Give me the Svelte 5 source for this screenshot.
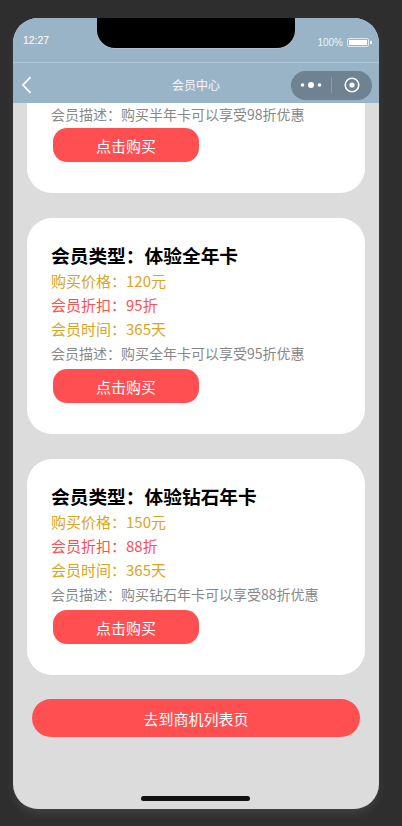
<script>
  const cards = [
    { name: '体验全年卡', price: 120, discount: 95, days: 365, desc: '购买全年卡可以享受95折优惠' },
    { name: '体验钻石年卡', price: 150, discount: 88, days: 365, desc: '购买钻石年卡可以享受88折优惠' }
  ];
</script>

<div class="page">
  <div class="phone">
    <div class="notch"></div>

    <header class="header">
      <div class="status">
        <span class="time">12:27</span>
        <div class="battery-wrap">
          <span>100%</span>
          <svg width="25" height="9" viewBox="0 0 25 9">
            <rect x="0.5" y="0.5" width="21" height="8" rx="1.5" fill="none" stroke="#dfe8ee" stroke-width="1" />
            <rect x="2" y="2" width="18" height="5" fill="#fff" />
            <rect x="23" y="3" width="2" height="3" fill="#fff" />
          </svg>
        </div>
      </div>
      <nav class="nav">
        <svg class="back" width="11" height="18" viewBox="0 0 11 18">
          <path d="M9.5 1.2 L2 9 L9.5 16.8" fill="none" stroke="#fff" stroke-width="1.8" />
        </svg>
        <span class="nav-title">会员中心</span>
        <div class="capsule">
          <svg width="22" height="8" viewBox="0 0 22 8">
            <circle cx="2.5" cy="4" r="1.8" fill="#fff" />
            <circle cx="11" cy="4" r="3" fill="#fff" />
            <circle cx="19.5" cy="4" r="1.8" fill="#fff" />
          </svg>
          <i class="divider"></i>
          <svg width="16" height="16" viewBox="0 0 16 16">
            <circle cx="8" cy="8" r="6.8" fill="none" stroke="#fff" stroke-width="1.6" />
            <circle cx="8" cy="8" r="2.6" fill="#fff" />
          </svg>
        </div>
      </nav>
    </header>

    <main class="content">
      <section class="card clipped">
        <p class="desc">会员描述：购买半年卡可以享受98折优惠</p>
        <button class="buy">点击购买</button>
      </section>
      {#each cards as card}
        <section class="card">
          <h3>会员类型：{card.name}</h3>
          <p class="gold">购买价格：{card.price}元</p>
          <p class="red">会员折扣：{card.discount}折</p>
          <p class="gold">会员时间：{card.days}天</p>
          <p class="desc">会员描述：{card.desc}</p>
          <button class="buy">点击购买</button>
        </section>
      {/each}
      <button class="go">去到商机列表页</button>
    </main>

    <div class="home-bar"></div>
  </div>
</div>

<style>
  :global(body) {
    margin: 0;
    background: #2e2e2e;
  }
  .page {
    height: 826px;
    padding: 18px 23px 0 13px;
    box-sizing: border-box;
    overflow: hidden;
    font-family: "Noto Sans CJK SC", "Noto Sans", sans-serif;
  }
  .phone {
    position: relative;
    display: flex;
    flex-direction: column;
    width: 366px;
    height: 791px;
    background: #dcdcdc;
    border-radius: 25px;
    overflow: hidden;
    box-shadow: 0 6px 12px -3px rgba(255, 255, 255, 0.12);
  }
  .notch {
    position: absolute;
    top: 0;
    left: 84px;
    z-index: 2;
    width: 198px;
    height: 30px;
    background: #000;
    border-radius: 0 0 18px 18px;
    box-shadow: 0 0.5px 0 #ccd;
  }
  .header {
    flex: none;
    background: #9ab4c7;
    color: #fff;
  }
  .status {
    display: flex;
    justify-content: space-between;
    height: 44px;
    padding: 0 7px 0 10px;
    border-bottom: 1px solid #b0c7d8;
    font-family: "Liberation Sans", sans-serif;
    font-size: 10.4px;
  }
  .time {
    margin-top: 17px;
  }
  .battery-wrap {
    display: flex;
    align-items: center;
    gap: 4px;
    height: 10px;
    margin-top: 19px;
    font-size: 10px;
    color: #eef3f6;
  }
  .nav {
    position: relative;
    display: flex;
    align-items: center;
    justify-content: space-between;
    height: 40px;
    padding: 0 7px 0 8px;
  }
  .back {
    margin-top: 3px;
  }
  .nav-title {
    position: absolute;
    left: 0;
    right: 0;
    top: 12px;
    font-size: 12px;
    line-height: 20px;
    text-align: center;
    color: #f4f7f9;
  }
  .capsule {
    display: flex;
    align-items: center;
    box-sizing: border-box;
    width: 81px;
    height: 29px;
    margin-top: 4px;
    padding-left: 9px;
    background: #6f8292;
    border-radius: 15px;
  }
  .divider {
    width: 1px;
    height: 16px;
    margin: 0 12px 0 9px;
    background: #8a9baa;
  }
  .content {
    flex: 1;
    min-height: 0;
    display: flex;
    flex-direction: column;
    gap: 25px;
    padding-left: 14px;
  }
  .card {
    flex: none;
    box-sizing: border-box;
    width: 338px;
    height: 216px;
    padding: 23px 25px 0 24px;
    background: #fff;
    border-radius: 25px;
  }
  .card.clipped {
    height: 90px;
    padding-top: 1px;
    border-radius: 0 0 25px 25px;
  }
  h3 {
    margin: 0;
    font-size: 18.72px;
    font-weight: 700;
    line-height: 28px;
    color: #000;
  }
  p {
    margin: 0;
    font-size: 15px;
    line-height: 24px;
  }
  .gold {
    color: #daa520;
  }
  .red {
    color: #ff4f51;
  }
  p.desc {
    font-size: 14px;
    line-height: 24px;
    color: #888;
  }
  .clipped p.desc {
    line-height: 20px;
  }
  button {
    display: block;
    border: none;
    padding: 0;
    background: #ff4f51;
    color: #fff;
    font-family: inherit;
    font-size: 15px;
  }
  .buy {
    width: 146px;
    height: 34px;
    margin: 4px 0 0 2px;
    border-radius: 14px;
  }
  .go {
    flex: none;
    width: 328px;
    height: 38px;
    margin: -1px 0 0 5px;
    border-radius: 19px;
  }
  .home-bar {
    position: absolute;
    left: 128px;
    bottom: 8px;
    width: 109px;
    height: 5px;
    background: #111;
    border-radius: 3px;
  }
</style>
